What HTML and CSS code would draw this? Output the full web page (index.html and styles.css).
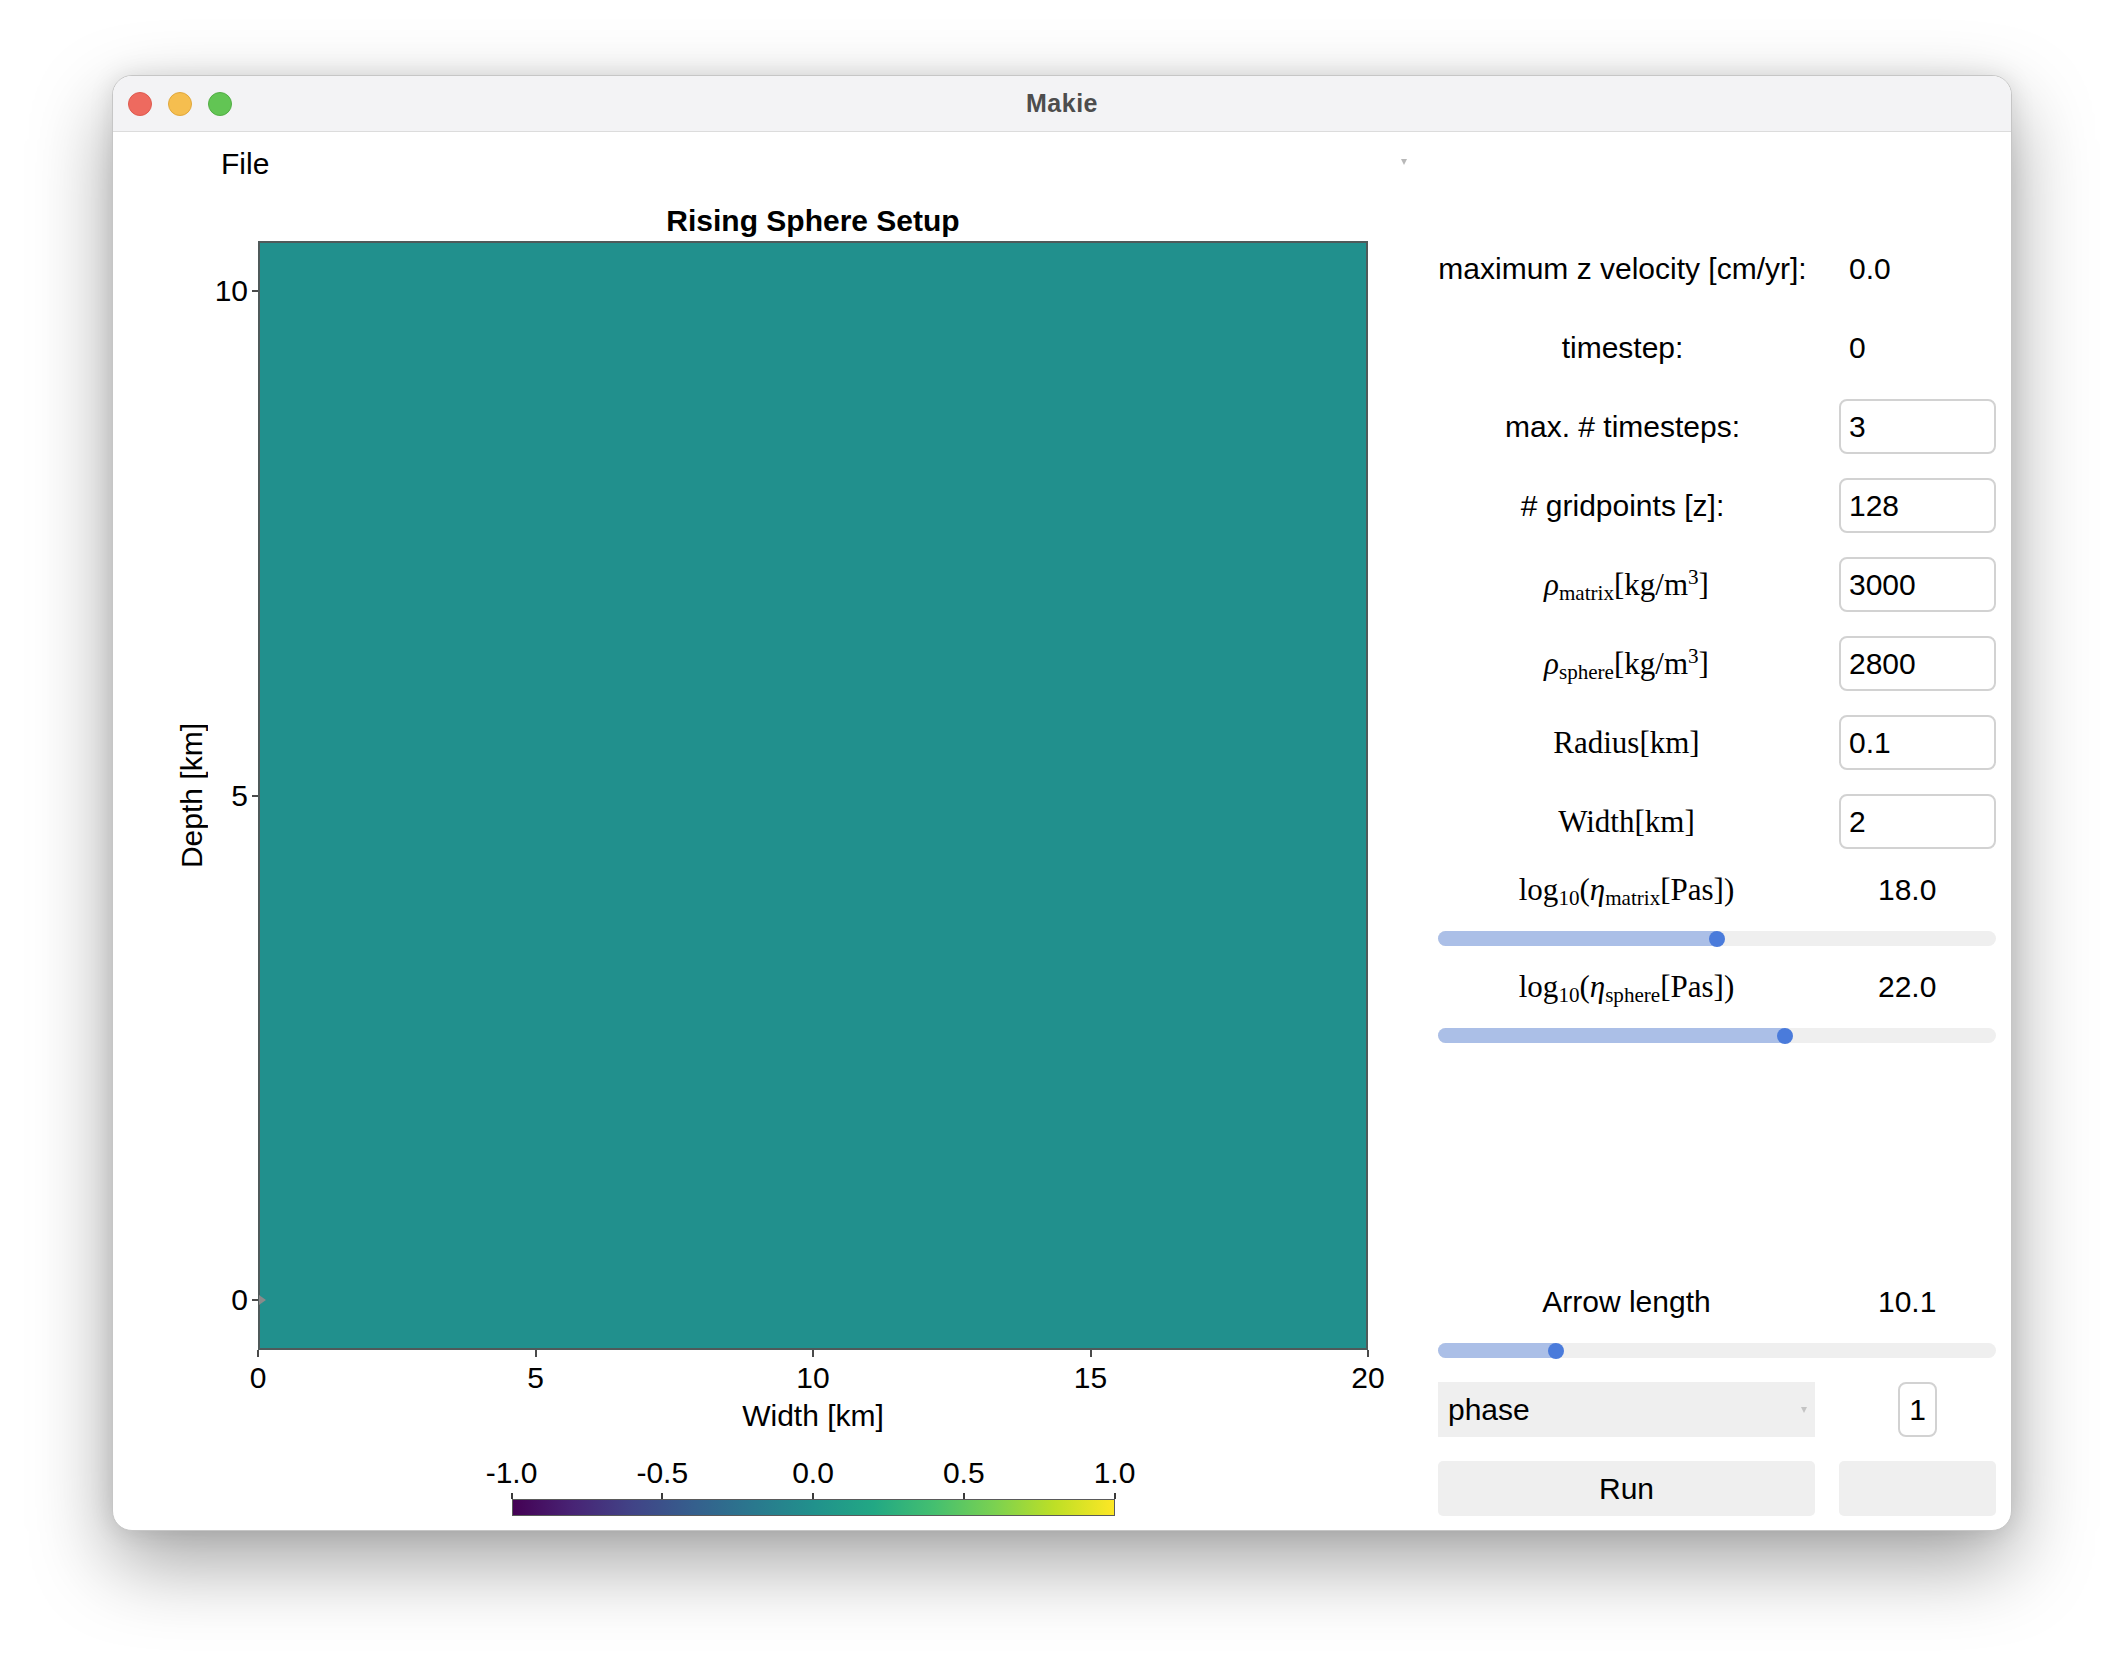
FILE: index.html
```html
<!DOCTYPE html>
<html>
<head>
<meta charset="utf-8">
<title>Makie</title>
<link rel="stylesheet" href="styles.css">
</head>
<body>
<div class="window">
  <div class="titlebar">
    <div class="lights"><span class="light red"></span><span class="light yellow"></span><span class="light green"></span></div>
    <div class="wtitle">Makie</div>
    <div></div>
  </div>
  <div class="content">
    <div class="leftcol">
      <div class="menubar">
        <span class="menu-label">File</span>
        <svg class="menu-tri" width="6" height="6" viewBox="0 0 6 6"><polygon points="0,0 6,0 3,6" fill="#b8b8b8"/></svg>
      </div>
      <div class="figtitle">Rising Sphere Setup</div>
      <div class="axis">
        <div class="ylabel">Depth [km]</div>
        <div class="yticklabels">
          <div class="yt"><span>10</span></div>
          <div class="yt"><span>5</span></div>
          <div class="yt"><span>0</span></div>
        </div>
        <div class="yticks">
          <div class="ytk"></div>
          <div class="ytk"></div>
          <div class="ytk"></div>
        </div>
        <div class="plot">
          <svg class="arrowhead" width="7" height="10" viewBox="0 0 7 10"><polygon points="0,0 7,5 0,10" fill="#8a8a8a"/></svg>
        </div>
        <div class="xticks">
          <div class="xtk"></div><div class="xtk"></div><div class="xtk"></div><div class="xtk"></div><div class="xtk"></div>
        </div>
        <div class="xticklabels">
          <div class="xt"><span>0</span></div>
          <div class="xt"><span>5</span></div>
          <div class="xt"><span>10</span></div>
          <div class="xt"><span>15</span></div>
          <div class="xt"><span>20</span></div>
        </div>
        <div class="xlabel">Width [km]</div>
        <div class="colorbar">
          <div class="cb-labels">
            <div class="xt"><span>-1.0</span></div>
            <div class="xt"><span>-0.5</span></div>
            <div class="xt"><span>0.0</span></div>
            <div class="xt"><span>0.5</span></div>
            <div class="xt"><span>1.0</span></div>
          </div>
          <div class="cb-ticks">
            <div class="cbtk"></div><div class="cbtk"></div><div class="cbtk"></div><div class="cbtk"></div><div class="cbtk"></div>
          </div>
          <div class="cb-bar"></div>
        </div>
      </div>
    </div>
    <div class="panel">
      <div class="lbl colon">maximum z velocity [cm/yr]:</div>
      <div class="val">0.0</div>

      <div class="lbl colon">timestep:</div>
      <div class="val">0</div>

      <div class="lbl colon">max. # timesteps:</div>
      <div class="tbox">3</div>

      <div class="lbl colon"># gridpoints [z]:</div>
      <div class="tbox">128</div>

      <div class="lbl"><span class="tex"><i>ρ</i><sub>matrix</sub>[kg/m<sup>3</sup>]</span></div>
      <div class="tbox">3000</div>

      <div class="lbl"><span class="tex"><i>ρ</i><sub>sphere</sub>[kg/m<sup>3</sup>]</span></div>
      <div class="tbox">2800</div>

      <div class="lbl"><span class="tex">Radius[km]</span></div>
      <div class="tbox">0.1</div>

      <div class="lbl"><span class="tex">Width[km]</span></div>
      <div class="tbox">2</div>

      <div class="lbl"><span class="tex">log<sub>10</sub>(<i>η</i><sub>matrix</sub>[Pas])</span></div>
      <div class="sval">18.0</div>
      <div class="slider"><div class="fill" style="width: calc(8px + 0.5 * (100% - 16px))"></div></div>

      <div class="lbl"><span class="tex">log<sub>10</sub>(<i>η</i><sub>sphere</sub>[Pas])</span></div>
      <div class="sval">22.0</div>
      <div class="slider"><div class="fill" style="width: calc(8px + 0.626 * (100% - 16px))"></div></div>

      <div class="spacer"></div>

      <div class="lbl">Arrow length</div>
      <div class="sval">10.1</div>
      <div class="slider"><div class="fill" style="width: calc(8px + 0.203 * (100% - 16px))"></div></div>

      <div class="menu">
        <span>phase</span>
        <svg width="6" height="6" viewBox="0 0 6 6"><polygon points="0,0 6,0 3,6" fill="#c4c4c4"/></svg>
      </div>
      <div class="smallbox">1</div>

      <div class="btn">Run</div>
      <div class="btn"></div>
    </div>
  </div>
</div>
</body>
</html>
```
FILE: styles.css
```css
* { box-sizing: border-box; }
html { margin: 0; padding: 0; overflow: hidden; }
body {
  margin: 0;
  padding: 0;
  min-height: 1680px;
  background: #ffffff;
  font-family: "Liberation Sans", Arial, sans-serif;
  color: #000;
}
.window {
  margin: 75px 0 0 112px;
  width: 1900px;
  height: 1456px;
  border: 1px solid #c6c6c6;
  border-radius: 20px;
  background: #fff;
  box-shadow: 0 32px 80px rgba(0,0,0,0.36), 0 0 24px rgba(0,0,0,0.10);
  overflow: hidden;
  display: flex;
  flex-direction: column;
}
.titlebar {
  flex: none;
  height: 56px;
  background: #f3f3f5;
  border-bottom: 1px solid #dcdcdc;
  display: grid;
  grid-template-columns: 1fr auto 1fr;
  align-items: center;
}
.lights { display: flex; gap: 16px; padding-left: 15px; }
.light { width: 24px; height: 24px; border-radius: 50%; }
.red { background: #ee6a5f; border: 1px solid #de5a4f; }
.yellow { background: #f5be4f; border: 1px solid #e0a73c; }
.green { background: #62c554; border: 1px solid #52ad45; }
.wtitle {
  font-weight: bold;
  font-size: 25px;
  letter-spacing: 0.5px;
  color: #4d4d4d;
}

.content {
  flex: 1;
  display: flex;
  padding-right: 15px;
}
.leftcol { width: 1325px; flex: none; display: flex; flex-direction: column; }

.menubar {
  margin: 14px 0 0 108px;
  width: 1186px;
  height: 36px;
  display: flex;
  justify-content: space-between;
  align-items: center;
  font-size: 30px;
  line-height: 36px;
}
.menu-tri { margin-bottom: 5px; }

.figtitle {
  margin-top: 21px;
  width: 1255px;
  padding-left: 145px;
  text-align: center;
  font-weight: bold;
  font-size: 30px;
  line-height: 36px;
}

.axis {
  margin-top: 2px;
  display: grid;
  grid-template-columns: 61px 36px 42px 6px 1110px;
  grid-template-rows: 1109px 7px auto auto auto;
  font-size: 30px;
  line-height: 36px;
}
.ylabel {
  grid-column: 2;
  grid-row: 1;
  align-self: center;
  writing-mode: vertical-rl;
  transform: rotate(180deg);
  white-space: nowrap;
}
.yticklabels {
  grid-column: 3;
  grid-row: 1;
  display: flex;
  flex-direction: column;
  justify-content: space-between;
  padding: 50px 4px 50px 0;
}
.yt {
  height: 0;
  display: flex;
  align-items: center;
  justify-content: flex-end;
}
.yt span { white-space: nowrap; }
.yticks {
  grid-column: 4;
  grid-row: 1;
  display: flex;
  flex-direction: column;
  justify-content: space-between;
  padding: 49px 0;
}
.ytk { height: 2px; width: 6px; background: #4a4a4a; }
.plot {
  grid-column: 5;
  grid-row: 1;
  position: relative;
  background: #21908d;
  border: 2px solid #4f5a5a;
}
.arrowhead { position: absolute; left: -1px; bottom: 43px; }
.xticks {
  grid-column: 5;
  grid-row: 2;
  display: flex;
  justify-content: space-between;
  margin: 0 -1px;
}
.xtk { width: 2px; height: 7px; background: #4a4a4a; }
.xticklabels {
  grid-column: 5;
  grid-row: 3;
  display: flex;
  justify-content: space-between;
  padding-top: 3px;
}
.xt { width: 0; display: flex; justify-content: center; }
.xt span { white-space: nowrap; }
.xlabel {
  grid-column: 5;
  grid-row: 4;
  margin-top: 2px;
  text-align: center;
}
.colorbar {
  grid-column: 5;
  grid-row: 5;
  justify-self: center;
  width: 603px;
  margin-top: 21px;
}
.cb-labels { display: flex; justify-content: space-between; }
.cb-ticks {
  margin: 2px -1px 0;
  height: 6px;
  display: flex;
  justify-content: space-between;
}
.cbtk { width: 2px; height: 6px; background: #3a3a3a; }
.cb-bar {
  height: 17px;
  border: 1px solid #5a5a5a;
  background: linear-gradient(to right,
    #440154 0%, #482475 10%, #414487 20%, #355f8d 30%, #2a788e 40%,
    #21918c 50%, #22a884 60%, #44bf70 70%, #7ad151 80%, #bddf26 90%, #fde725 100%);
}

.panel {
  width: 558px;
  flex: none;
  display: grid;
  grid-template-columns: 377px 157px;
  grid-template-rows: repeat(8, 55px) 34px 15px 34px 15px 1fr 34px 15px 55px 55px;
  column-gap: 24px;
  row-gap: 24px;
  padding: 109px 0 14px;
  font-size: 30px;
  line-height: 36px;
}
.lbl {
  grid-column: 1;
  display: flex;
  align-items: center;
  justify-content: center;
  white-space: nowrap;
}
.lbl.colon { padding-right: 8px; }
.val {
  display: flex;
  align-items: center;
  padding-left: 10px;
}
.sval {
  display: flex;
  align-items: center;
  padding-left: 39px;
}
.tbox {
  display: flex;
  align-items: center;
  padding-left: 8px;
  border: 2px solid #d2d2d2;
  border-radius: 8px;
}
.tex {
  font-family: "Liberation Serif", "Times New Roman", serif;
  font-size: 31px;
}
.tex sub, .tex sup { font-size: 0.68em; line-height: 0; }
.tex sub { vertical-align: -0.22em; }
.tex sup { vertical-align: 0.5em; }
.tex i { font-style: italic; }

.slider {
  grid-column: 1 / -1;
  background: #efefef;
  border-radius: 8px;
  display: flex;
}
.fill {
  position: relative;
  background: #abbfe7;
  border-radius: 8px 0 0 8px;
}
.fill::after {
  content: "";
  position: absolute;
  right: -8px;
  top: -0.5px;
  width: 16px;
  height: 16px;
  border-radius: 50%;
  background: #4a7bdb;
}
.spacer { grid-column: 1 / -1; }
.menu {
  grid-column: 1;
  background: #efefef;
  display: flex;
  align-items: center;
  justify-content: space-between;
  padding: 0 8px 0 10px;
}
.smallbox {
  justify-self: center;
  width: 39px;
  display: flex;
  align-items: center;
  justify-content: center;
  border: 2px solid #d2d2d2;
  border-radius: 8px;
}
.btn {
  background: #efefef;
  border-radius: 5px;
  display: flex;
  align-items: center;
  justify-content: center;
}
```
